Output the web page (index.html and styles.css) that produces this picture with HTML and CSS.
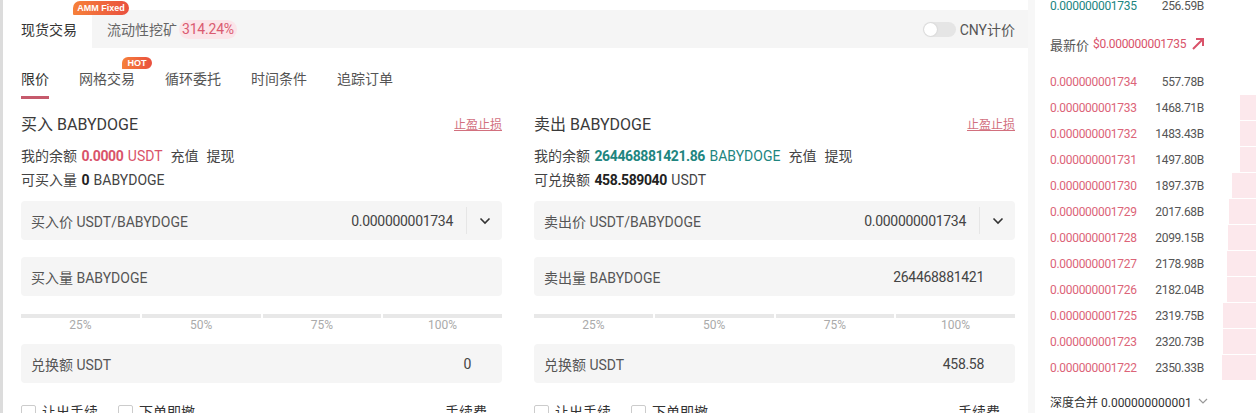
FILE: index.html
```html
<!DOCTYPE html>
<html lang="zh-CN">
<head>
  <meta charset="UTF-8">
  <meta name="viewport" content="width=device-width, initial-scale=1.0">
  <title>BABYDOGE/USDT</title>
  <link rel="stylesheet" href="styles.css">
</head>
<body>
  <div class="page">
    <div class="main">
      <div class="tabbar">
        <div class="tab active">现货交易</div>
        <div class="tab">
          <span class="badge badge-amm">AMM Fixed</span>
          流动性挖矿<span class="rate">314.24%</span>
        </div>
        <div class="cny"><span class="switch"></span>CNY计价</div>
      </div>

      <div class="subtabs">
        <span class="subtab active">限价</span>
        <span class="subtab">网格交易<span class="badge badge-hot">HOT</span></span>
        <span class="subtab">循环委托</span>
        <span class="subtab">时间条件</span>
        <span class="subtab">追踪订单</span>
      </div>

      <div class="forms">
        <!-- buy -->
        <div class="form">
          <div class="form-title">
            <span>买入 BABYDOGE</span>
            <a class="stop" href="#">止盈止损</a>
          </div>
          <div class="info">我的余额 <b class="red">0.0000</b> <span class="red">USDT</span><span class="link">充值</span><span class="link">提现</span></div>
          <div class="info small-gap">可买入量 <b>0</b> BABYDOGE</div>

          <div class="field first">
            <span class="field-label">买入价 USDT/BABYDOGE</span>
            <span class="field-value">0.000000001734</span>
            <span class="field-select">
              <svg width="12" height="8" viewBox="0 0 12 8"><path d="M1.5 1.5 6 6l4.5-4.5" fill="none" stroke="#333" stroke-width="1.6"/></svg>
            </span>
          </div>
          <div class="field plain">
            <span class="field-label">买入量 BABYDOGE</span>
            <span class="field-value"></span>
          </div>

          <div class="slider">
            <div class="step"><span class="track"></span>25%</div>
            <div class="step"><span class="track"></span>50%</div>
            <div class="step"><span class="track"></span>75%</div>
            <div class="step"><span class="track"></span>100%</div>
          </div>

          <div class="field plain">
            <span class="field-label">兑换额 USDT</span>
            <span class="field-value">0</span>
          </div>

          <div class="options">
            <label class="check"><span class="box"></span>让出手续</label>
            <label class="check"><span class="box"></span>下单即撤</label>
            <span class="fee">手续费</span>
          </div>
        </div>

        <!-- sell -->
        <div class="form">
          <div class="form-title">
            <span>卖出 BABYDOGE</span>
            <a class="stop" href="#">止盈止损</a>
          </div>
          <div class="info">我的余额 <b class="green">264468881421.86</b> <span class="green">BABYDOGE</span><span class="link">充值</span><span class="link">提现</span></div>
          <div class="info small-gap">可兑换额 <b>458.589040</b> USDT</div>

          <div class="field first">
            <span class="field-label">卖出价 USDT/BABYDOGE</span>
            <span class="field-value">0.000000001734</span>
            <span class="field-select">
              <svg width="12" height="8" viewBox="0 0 12 8"><path d="M1.5 1.5 6 6l4.5-4.5" fill="none" stroke="#333" stroke-width="1.6"/></svg>
            </span>
          </div>
          <div class="field plain">
            <span class="field-label">卖出量 BABYDOGE</span>
            <span class="field-value">264468881421</span>
          </div>

          <div class="slider">
            <div class="step"><span class="track"></span>25%</div>
            <div class="step"><span class="track"></span>50%</div>
            <div class="step"><span class="track"></span>75%</div>
            <div class="step"><span class="track"></span>100%</div>
          </div>

          <div class="field plain">
            <span class="field-label">兑换额 USDT</span>
            <span class="field-value">458.58</span>
          </div>

          <div class="options">
            <label class="check"><span class="box"></span>让出手续</label>
            <label class="check"><span class="box"></span>下单即撤</label>
            <span class="fee">手续费</span>
          </div>
        </div>
      </div>
    </div>

    <div class="book">
      <div class="row">
        <span class="price green">0.000000001735</span>
        <span class="amount">256.59B</span>
      </div>
      <div class="last">
        最新价 <span class="red">$0.000000001735</span>
        <svg class="arrow" width="14" height="14" viewBox="0 0 14 14"><path d="M2 12 12 2M5 2h7v7" fill="none" stroke="#d9536a" stroke-width="2"/></svg>
      </div>
      <div class="asks">
        <div class="row"><span class="depth" style="width:0px"></span><span class="price">0.000000001734</span><span class="amount">557.78B</span></div>
        <div class="row"><span class="depth" style="width:16px"></span><span class="price">0.000000001733</span><span class="amount">1468.71B</span></div>
        <div class="row"><span class="depth" style="width:16px"></span><span class="price">0.000000001732</span><span class="amount">1483.43B</span></div>
        <div class="row"><span class="depth" style="width:16px"></span><span class="price">0.000000001731</span><span class="amount">1497.80B</span></div>
        <div class="row"><span class="depth" style="width:24px"></span><span class="price">0.000000001730</span><span class="amount">1897.37B</span></div>
        <div class="row"><span class="depth" style="width:27px"></span><span class="price">0.000000001729</span><span class="amount">2017.68B</span></div>
        <div class="row"><span class="depth" style="width:28px"></span><span class="price">0.000000001728</span><span class="amount">2099.15B</span></div>
        <div class="row"><span class="depth" style="width:29px"></span><span class="price">0.000000001727</span><span class="amount">2178.98B</span></div>
        <div class="row"><span class="depth" style="width:29px"></span><span class="price">0.000000001726</span><span class="amount">2182.04B</span></div>
        <div class="row"><span class="depth" style="width:33px"></span><span class="price">0.000000001725</span><span class="amount">2319.75B</span></div>
        <div class="row"><span class="depth" style="width:33px"></span><span class="price">0.000000001723</span><span class="amount">2320.73B</span></div>
        <div class="row"><span class="depth" style="width:34px"></span><span class="price">0.000000001722</span><span class="amount">2350.33B</span></div>
      </div>
      <div class="merge">
        深度合并 0.000000000001
        <svg width="10" height="6" viewBox="0 0 10 6"><path d="M1 1l4 4 4-4" fill="none" stroke="#999" stroke-width="1.2"/></svg>
      </div>
    </div>
  </div>
</body>
</html>
```

FILE: styles.css
```css
body {
  margin: 0;
  font-family: Roboto, "Noto Sans CJK SC", sans-serif;
  color: #333;
  background-color: #fff;
  overflow: hidden;
}

.page {
  display: flex;
  height: 413px;
  border-left: 3px solid #dcdcdc;
  background-color: #f7f7f7;
}

/* ---- main trading panel ---- */

.main {
  width: 1025px;
  background-color: #fff;
  padding-top: 10px;
}

.tabbar {
  display: flex;
  align-items: center;
  height: 38px;
  background-color: #f5f5f5;
  padding-right: 13px;
}

.tab {
  position: relative;
  display: flex;
  align-items: center;
  height: 100%;
  padding: 0 15px;
  font-size: 14px;
  color: #666;
}

.tab.active {
  background-color: #fff;
  color: #333;
  padding: 0 15px 0 18px;
}

.rate {
  margin-left: 2px;
  padding: 0 3px;
  line-height: 19px;
  border-radius: 10px;
  background-color: #fbe5e9;
  color: #da5a70;
  letter-spacing: -0.2px;
}

.badge {
  position: absolute;
  color: #fff;
  font-family: "Liberation Sans", Arial, sans-serif;
  font-size: 9px;
  font-weight: bold;
  text-align: center;
  background: linear-gradient(90deg, #f6803a, #e9503f);
  border-radius: 7px 7px 7px 1px;
}

.badge-amm {
  left: -19px;
  top: -9px;
  width: 56px;
  height: 14px;
  line-height: 14px;
}

.badge-hot {
  left: 43px;
  top: -12px;
  width: 30px;
  height: 12px;
  line-height: 12px;
}

.cny {
  margin-left: auto;
  display: flex;
  align-items: center;
  font-size: 14px;
  color: #555;
}

.switch {
  position: relative;
  width: 33px;
  height: 15px;
  margin-right: 4px;
  border-radius: 8px;
  background-color: #e5e5e5;
}

.switch::after {
  content: "";
  position: absolute;
  left: 1px;
  top: 1px;
  width: 13px;
  height: 13px;
  border-radius: 50%;
  background-color: #fff;
  box-shadow: 0 0 2px rgba(0, 0, 0, 0.15);
}

.subtabs {
  display: flex;
  gap: 30px;
  padding: 21px 0 0 18px;
}

.subtab {
  position: relative;
  font-size: 14px;
  line-height: 20px;
  color: #555;
  padding-bottom: 7px;
  border-bottom: 3px solid transparent;
}

.subtab.active {
  color: #333;
  border-bottom-color: #c65a6c;
}

/* ---- buy / sell forms ---- */

.forms {
  display: flex;
  gap: 32px;
  padding: 0 13px 0 18px;
}

.form {
  flex: 1;
}

.form-title {
  display: flex;
  justify-content: space-between;
  align-items: center;
  margin-top: 15px;
  line-height: 22px;
  font-size: 16px;
  color: #3a3a3a;
}

.stop {
  font-size: 12px;
  color: #d2707e;
}

.info {
  margin-top: 10px;
  line-height: 20px;
  font-size: 14px;
  color: #444;
}

.info.small-gap {
  margin-top: 4px;
}

.info b {
  margin: 0 1px;
  color: #222;
  letter-spacing: -0.4px;
}

.red {
  color: #d9536a !important;
}

.green {
  color: #21857f !important;
}

.link {
  margin-left: 8px;
}

.field {
  display: flex;
  align-items: center;
  height: 39px;
  margin-top: 17px;
  padding-left: 10px;
  background-color: #f5f5f5;
  border-radius: 4px;
  font-size: 14px;
}

.field.first {
  margin-top: 11px;
}

.field.plain {
  padding-right: 31px;
}

.field-label {
  color: #555;
}

.field-value {
  margin-left: auto;
  color: #444;
  letter-spacing: -0.3px;
}

.field-select {
  display: flex;
  align-items: center;
  justify-content: center;
  width: 35px;
  height: 27px;
  margin-left: 13px;
  border-left: 1px solid #e6e6e6;
}

.slider {
  display: grid;
  grid-template-columns: repeat(4, 1fr);
  gap: 2px;
  margin-top: 18px;
}

.step {
  display: flex;
  flex-direction: column;
  align-items: center;
  font-size: 12px;
  line-height: 14px;
  color: #aaa;
}

.track {
  align-self: stretch;
  height: 4px;
  background-color: #e8e8e8;
}

.slider + .field {
  margin-top: 12px;
}

.options {
  display: flex;
  align-items: center;
  margin-top: 19px;
  line-height: 20px;
  font-size: 14px;
  color: #333;
}

.check {
  display: flex;
  align-items: center;
  margin-right: 20px;
}

.box {
  width: 13px;
  height: 13px;
  margin-right: 6px;
  border: 1px solid #ccc;
  border-radius: 2px;
}

.fee {
  margin-left: auto;
  margin-right: 15px;
}

/* ---- order book ---- */

.book {
  width: 221px;
  margin-left: 7px;
  margin-top: -7px;
  background-color: #fff;
  font-size: 12px;
}

.row {
  position: relative;
  display: flex;
  justify-content: space-between;
  align-items: center;
  height: 26px;
  padding: 0 52px 0 15px;
  letter-spacing: -0.3px;
}

.price {
  position: relative;
  color: #dc6478;
}

.amount {
  position: relative;
  color: #555;
}

.depth {
  position: absolute;
  right: 0;
  top: 0;
  height: 25px;
  background-color: #fce8ec;
}

.last {
  display: flex;
  align-items: center;
  height: 50px;
  padding-left: 15px;
  font-size: 13px;
  color: #555;
}

.last .red {
  margin-left: 4px;
  font-size: 12px;
  letter-spacing: -0.3px;
}

.arrow {
  margin-left: 5px;
}

.merge {
  display: flex;
  align-items: center;
  gap: 6px;
  height: 40px;
  padding-left: 15px;
  color: #333;
}
```
